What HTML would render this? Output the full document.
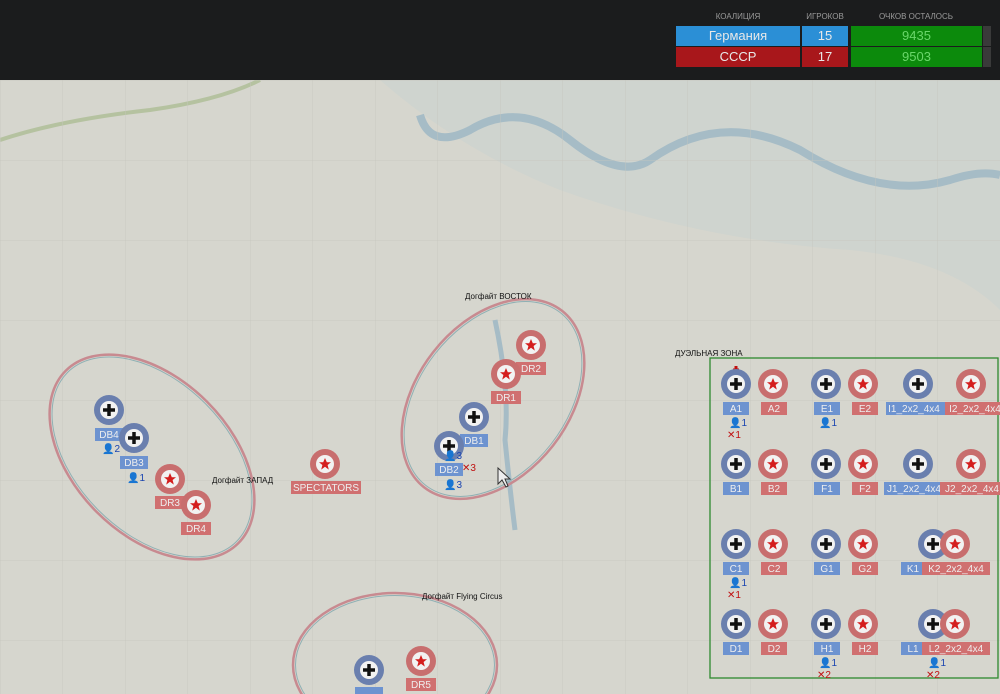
<!DOCTYPE html>
<html><head><meta charset="utf-8"><style>
body{margin:0;width:1000px;height:694px;overflow:hidden;background:#d6d6ce;font-family:"Liberation Sans","DejaVu Sans",sans-serif}
#top{position:absolute;left:0;top:0;width:1000px;height:80px;background:#1b1c1d}
.h{position:absolute;top:12px;font-size:8px;color:#9a9a9a;text-align:center}
.c{position:absolute;height:20px;line-height:20px;text-align:center;font-size:13px;color:#e8e8e8}
svg{position:absolute;left:0;top:80px}
</style></head><body>
<div id="top">
<div class="h" style="left:676px;width:124px">КОАЛИЦИЯ</div>
<div class="h" style="left:802px;width:46px">ИГРОКОВ</div>
<div class="h" style="left:850px;width:132px">ОЧКОВ ОСТАЛОСЬ</div>
<div class="c" style="left:676px;top:26px;width:124px;background:#2b8fd6">Германия</div>
<div class="c" style="left:802px;top:26px;width:46px;background:#2b8fd6">15</div>
<div class="c" style="left:851px;top:26px;width:131px;background:#0c8a0c;color:#6ad66a">9435</div>
<div class="c" style="left:983px;top:26px;width:8px;background:#3a3a3a"></div>
<div class="c" style="left:676px;top:47px;width:124px;background:#a8171b">СССР</div>
<div class="c" style="left:802px;top:47px;width:46px;background:#a8171b">17</div>
<div class="c" style="left:851px;top:47px;width:131px;background:#0c8a0c;color:#6ad66a">9503</div>
<div class="c" style="left:983px;top:47px;width:8px;background:#3a3a3a"></div>
</div>
<svg width="1000" height="614" viewBox="0 80 1000 614" font-family="Liberation Sans, sans-serif" overflow="hidden">
<defs>
<pattern id="g" x="0" y="0" width="62.5" height="80" patternUnits="userSpaceOnUse">
<path d="M0 0V80M0 0H62.5" stroke="#c6c6be" stroke-width="0.8" fill="none"/>
</pattern>
<g id="B"><circle r="15" fill="#6a7fae"/><circle r="9" fill="#f2f2f2"/><path d="M-6 0H6M0 -6V6" stroke="#111" stroke-width="3.5"/></g>
<g id="R"><circle r="15" fill="#c86e6e"/><circle r="9" fill="#f2f2f2"/><path d="M0 -6 1.8-1.8 6-1.8 2.6 1 3.8 5.6 0 2.8-3.8 5.6-2.6 1-6-1.8-1.8-1.8Z" fill="#d41e1e"/></g>
</defs>
<rect x="0" y="80" width="1000" height="614" fill="#d6d6ce"/>
<path d="M380 80 Q460 150 560 190 Q700 240 850 250 Q950 260 1000 310 V80Z" fill="#cfd4cf"/>
<path d="M420 115 Q430 150 470 130 Q520 100 570 140 Q620 180 650 160 Q720 110 800 150 Q880 200 950 180 Q980 170 1000 175" stroke="#a6bcc6" stroke-width="8" fill="none"/>
<path d="M0 140 Q60 120 150 110 Q220 100 260 80" stroke="#b5c2a0" stroke-width="4" fill="none"/>
<rect x="0" y="80" width="1000" height="614" fill="url(#g)"/>
<path d="M495 320 Q510 390 505 440 Q510 490 515 530" stroke="#a6bcc6" stroke-width="5" fill="none"/>
<g fill="none">
<ellipse cx="152" cy="457" rx="122" ry="78" transform="rotate(45 152 457)" stroke="#c88a90" stroke-width="2.5"/>
<ellipse cx="152" cy="457" rx="119.5" ry="75.5" transform="rotate(45 152 457)" stroke="#8fb0b4" stroke-width="1"/>
<ellipse cx="493" cy="399" rx="112" ry="76" transform="rotate(-52 493 399)" stroke="#c88a90" stroke-width="2.5"/>
<ellipse cx="493" cy="399" rx="109.5" ry="73.5" transform="rotate(-52 493 399)" stroke="#8fb0b4" stroke-width="1"/>
<ellipse cx="395" cy="665" rx="102" ry="72" stroke="#c88a90" stroke-width="2.5"/>
<ellipse cx="395" cy="665" rx="99.5" ry="69.5" stroke="#8fb0b4" stroke-width="1"/>
</g>
<rect x="710" y="358" width="288" height="320" fill="none" stroke="#2e8a2e" stroke-width="1.3"/>
<g font-size="8" fill="#111">
<text x="465" y="299">Догфайт ВОСТОК</text>
<text x="212" y="483">Догфайт ЗАПАД</text>
<text x="422" y="599">Догфайт Flying Circus</text>
<text x="675" y="356">ДУЭЛЬНАЯ ЗОНА</text>
</g>
<path d="M736 366V378M733 370H739" stroke="#c01010" stroke-width="3"/>
<g font-size="10" fill="#eee" text-anchor="middle">
<use href="#B" x="109" y="410"/><rect x="95" y="428" width="28" height="13" fill="#6d93d0"/><text x="109" y="438">DB4</text>
<use href="#B" x="134" y="438"/><rect x="120" y="456" width="28" height="13" fill="#6d93d0"/><text x="134" y="466">DB3</text>
<use href="#R" x="170" y="479"/><rect x="155" y="496" width="30" height="13" fill="#d07070"/><text x="170" y="506">DR3</text>
<use href="#R" x="196" y="505"/><rect x="181" y="522" width="30" height="13" fill="#d07070"/><text x="196" y="532">DR4</text>
<use href="#R" x="325" y="464"/><rect x="291" y="481" width="70" height="13" fill="#d07070"/><text x="326" y="491">SPECTATORS</text>
<use href="#R" x="531" y="345"/><rect x="516" y="362" width="30" height="13" fill="#d07070"/><text x="531" y="372">DR2</text>
<use href="#R" x="506" y="374"/><rect x="491" y="391" width="30" height="13" fill="#d07070"/><text x="506" y="401">DR1</text>
<use href="#B" x="474" y="417"/><rect x="460" y="434" width="28" height="13" fill="#6d93d0"/><text x="474" y="444">DB1</text>
<use href="#B" x="449" y="446"/><rect x="435" y="463" width="28" height="13" fill="#6d93d0"/><text x="449" y="473">DB2</text>
<use href="#B" x="369" y="670"/><rect x="355" y="687" width="28" height="13" fill="#6d93d0"/>
<use href="#R" x="421" y="661"/><rect x="406" y="678" width="30" height="13" fill="#d07070"/><text x="421" y="688">DR5</text>
<use href="#B" x="736" y="384"/><rect x="723" y="402" width="26" height="13" fill="#6d93d0"/><text x="736" y="412">A1</text>
<use href="#R" x="773" y="384"/><rect x="761" y="402" width="26" height="13" fill="#d07070"/><text x="774" y="412">A2</text>
<use href="#B" x="826" y="384"/><rect x="814" y="402" width="26" height="13" fill="#6d93d0"/><text x="827" y="412">E1</text>
<use href="#R" x="863" y="384"/><rect x="852" y="402" width="26" height="13" fill="#d07070"/><text x="865" y="412">E2</text>
<use href="#B" x="918" y="384"/><rect x="886" y="402" width="64" height="13" fill="#6d93d0"/><text x="914" y="412">I1_2x2_4x4</text>
<use href="#R" x="971" y="384"/><rect x="945" y="402" width="55" height="13" fill="#d07070"/><text x="975" y="412">I2_2x2_4x4</text>
<use href="#B" x="736" y="464"/><rect x="723" y="482" width="26" height="13" fill="#6d93d0"/><text x="736" y="492">B1</text>
<use href="#R" x="773" y="464"/><rect x="761" y="482" width="26" height="13" fill="#d07070"/><text x="774" y="492">B2</text>
<use href="#B" x="826" y="464"/><rect x="814" y="482" width="26" height="13" fill="#6d93d0"/><text x="827" y="492">F1</text>
<use href="#R" x="863" y="464"/><rect x="852" y="482" width="26" height="13" fill="#d07070"/><text x="865" y="492">F2</text>
<use href="#B" x="918" y="464"/><rect x="884" y="482" width="64" height="13" fill="#6d93d0"/><text x="914" y="492">J1_2x2_4x4</text>
<use href="#R" x="971" y="464"/><rect x="940" y="482" width="60" height="13" fill="#d07070"/><text x="972" y="492">J2_2x2_4x4</text>
<use href="#B" x="736" y="544"/><rect x="723" y="562" width="26" height="13" fill="#6d93d0"/><text x="736" y="572">C1</text>
<use href="#R" x="773" y="544"/><rect x="761" y="562" width="26" height="13" fill="#d07070"/><text x="774" y="572">C2</text>
<use href="#B" x="826" y="544"/><rect x="814" y="562" width="26" height="13" fill="#6d93d0"/><text x="827" y="572">G1</text>
<use href="#R" x="863" y="544"/><rect x="852" y="562" width="26" height="13" fill="#d07070"/><text x="865" y="572">G2</text>
<use href="#B" x="933" y="544"/><rect x="901" y="562" width="26" height="13" fill="#6d93d0"/><text x="913" y="572">K1</text>
<use href="#R" x="955" y="544"/><rect x="922" y="562" width="68" height="13" fill="#d07070"/><text x="956" y="572">K2_2x2_4x4</text>
<use href="#B" x="736" y="624"/><rect x="723" y="642" width="26" height="13" fill="#6d93d0"/><text x="736" y="652">D1</text>
<use href="#R" x="773" y="624"/><rect x="761" y="642" width="26" height="13" fill="#d07070"/><text x="774" y="652">D2</text>
<use href="#B" x="826" y="624"/><rect x="814" y="642" width="26" height="13" fill="#6d93d0"/><text x="827" y="652">H1</text>
<use href="#R" x="863" y="624"/><rect x="852" y="642" width="26" height="13" fill="#d07070"/><text x="865" y="652">H2</text>
<use href="#B" x="933" y="624"/><rect x="901" y="642" width="26" height="13" fill="#6d93d0"/><text x="913" y="652">L1</text>
<use href="#R" x="955" y="624"/><rect x="922" y="642" width="68" height="13" fill="#d07070"/><text x="956" y="652">L2_2x2_4x4</text>
</g>
<g font-size="10" fill="#1a44b0">
<text x="102" y="452">👤2</text><text x="127" y="481">👤1</text>
<text x="444" y="459">👤3</text><text x="444" y="488">👤3</text>
<text x="729" y="426">👤1</text><text x="819" y="426">👤1</text>
<text x="729" y="586">👤1</text><text x="819" y="666">👤1</text><text x="928" y="666">👤1</text>
</g>
<g font-size="10" fill="#c01010">
<text x="462" y="471">✕3</text><text x="727" y="438">✕1</text><text x="727" y="598">✕1</text>
<text x="817" y="678">✕2</text><text x="926" y="678">✕2</text>
</g>
<path d="M498 468 L498 484 L502 480 L506 487 L508 486 L505 479 L510 479Z" fill="#eee" stroke="#333" stroke-width="1"/>
</svg>
</body></html>
